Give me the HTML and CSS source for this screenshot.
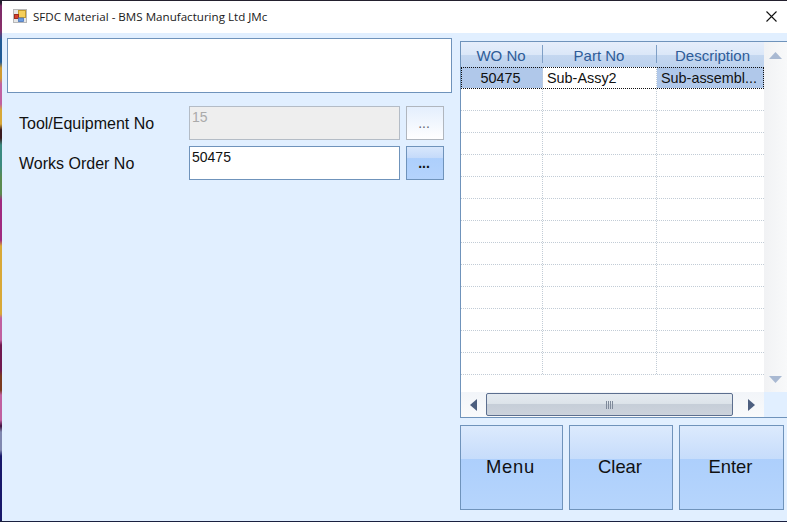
FILE: index.html
```html
<!DOCTYPE html>
<html lang="en">
<head>
<meta charset="utf-8">
<title>SFDC Material</title>
<link rel="stylesheet" href="styles.css">
</head>
<body>
<div class="window">
  <header class="titlebar">
    <svg class="app-icon" width="14" height="14" viewBox="0 0 14 14">
      <rect x="0.5" y="0.5" width="13" height="13" fill="#e6e6e6" stroke="#b8b8b8"/>
      <rect x="5.5" y="1.5" width="7" height="7" fill="#f6cf5a" stroke="#c49a2c"/>
      <rect x="1.5" y="5.5" width="4" height="4" fill="#d8402c" stroke="#9c2f20"/>
      <rect x="5.5" y="9" width="5" height="3.5" fill="#6a9be0" stroke="#4a76b8" stroke-width="0.8"/>
    </svg>
    <span class="title">SFDC Material - BMS Manufacturing Ltd JMc</span>
    <svg class="close" width="11" height="11" viewBox="0 0 11 11">
      <path d="M0.5 0.5 10.5 10.5M10.5 0.5 0.5 10.5" stroke="#111" stroke-width="1.1" fill="none"/>
    </svg>
  </header>
  <main class="client">
    <section class="left">
      <div class="message"></div>
      <div class="form">
        <div class="field">
          <label class="label">Tool/Equipment No</label>
          <div class="input disabled">15</div>
          <button class="dots">...</button>
        </div>
        <div class="field">
          <label class="label">Works Order No</label>
          <div class="input">50475</div>
          <button class="dots active">...</button>
        </div>
      </div>
    </section>
    <section class="right">
      <div class="grid">
        <div class="grid-top">
          <div class="table">
            <div class="row head">
              <div class="c1">WO No</div><div class="c2">Part No</div><div class="c3">Description</div>
            </div>
            <div class="row selected">
              <div class="c1 sel wo">50475</div><div class="c2 left-text">Sub-Assy2</div><div class="c3 sel left-text">Sub-assembl...</div>
            </div>
            <div class="row"><div class="c1"></div><div class="c2"></div><div class="c3"></div></div>
            <div class="row"><div class="c1"></div><div class="c2"></div><div class="c3"></div></div>
            <div class="row"><div class="c1"></div><div class="c2"></div><div class="c3"></div></div>
            <div class="row"><div class="c1"></div><div class="c2"></div><div class="c3"></div></div>
            <div class="row"><div class="c1"></div><div class="c2"></div><div class="c3"></div></div>
            <div class="row"><div class="c1"></div><div class="c2"></div><div class="c3"></div></div>
            <div class="row"><div class="c1"></div><div class="c2"></div><div class="c3"></div></div>
            <div class="row"><div class="c1"></div><div class="c2"></div><div class="c3"></div></div>
            <div class="row"><div class="c1"></div><div class="c2"></div><div class="c3"></div></div>
            <div class="row"><div class="c1"></div><div class="c2"></div><div class="c3"></div></div>
            <div class="row"><div class="c1"></div><div class="c2"></div><div class="c3"></div></div>
            <div class="row"><div class="c1"></div><div class="c2"></div><div class="c3"></div></div>
            <div class="row"><div class="c1"></div><div class="c2"></div><div class="c3"></div></div>
          </div>
          <div class="vscroll">
            <svg width="13" height="8" viewBox="0 0 13 8"><path d="M6.5 0 13 7H0Z" fill="#a9b9d2"/></svg>
            <svg width="13" height="8" viewBox="0 0 13 8"><path d="M0 0H13L6.5 7Z" fill="#a9b9d2"/></svg>
          </div>
        </div>
        <div class="hscroll">
          <svg width="7" height="12" viewBox="0 0 7 12"><path d="M7 0V12L0 6Z" fill="#4d5f7f"/></svg>
          <div class="thumb"><span class="grip"></span></div>
          <svg class="arrow-right" width="7" height="12" viewBox="0 0 7 12"><path d="M0 0V12L7 6Z" fill="#4d5f7f"/></svg>
        </div>
      </div>
      <div class="actions">
        <button class="action menu">Menu</button>
        <button class="action clear">Clear</button>
        <button class="action enter">Enter</button>
      </div>
    </section>
  </main>
</div>
</body>
</html>
```
FILE: styles.css
```css
* { box-sizing: border-box; }
html, body { margin: 0; height: 100%; }
body {
  width: 787px;
  height: 522px;
  overflow: hidden;
  padding: 1px 0 1px 2px;
  background: linear-gradient(180deg,
    #23202e 0, #23202e 3px, #7a2a68 6px, #8a2f6a 30px,
    #1f5a96 40px, #1f5a96 62px, #d09a30 68px, #d09a30 78px,
    #c060a0 84px, #c060a0 104px, #d8a838 110px, #d8a838 124px,
    #3a1a20 130px, #3a1a20 138px, #3b8a80 145px, #3b8a80 165px,
    #5a8a50 178px, #5a8a50 194px, #a02a80 200px, #a02a80 240px,
    #d8a838 246px, #d8a838 314px, #c060a0 318px, #c060a0 340px,
    #701850 345px, #701850 370px, #7a3a20 376px, #7a3a20 390px,
    #c060a0 395px, #c060a0 420px, #401040 426px, #8088b0 432px,
    #8088b0 450px, #17176a 456px, #17176a 520px, #1a2040 521px);
  font-family: "Liberation Sans", Arial, sans-serif;
}
.window { width: 785px; height: 520px; display: flex; flex-direction: column; }
.titlebar {
  height: 32px;
  flex: none;
  background: #fff;
  display: flex;
  align-items: center;
  padding: 0 10px 0 11px;
}
.app-icon { flex: none; margin: 0 6px 2px 0; }
.title { font: 11.6px "Open Sans", "Noto Sans", sans-serif; color: #1a1a1a; flex: 1; white-space: nowrap; margin-bottom: 1px; }
.close { flex: none; margin-bottom: 2px; }
.client {
  flex: 1;
  background: #e1efff;
  display: flex;
  padding: 5px 0 0 5px;
}
.left { width: 445px; flex: none; }
.message { height: 55px; background: #fff; border: 1px solid #6f93bb; }
.form { padding: 13px 8px 0 12px; display: flex; flex-direction: column; gap: 6px; }
.field { display: flex; align-items: center; height: 34px; }
.label { width: 170px; flex: none; font-size: 16px; color: #111; padding-top: 2px; }
.input {
  width: 211px;
  height: 34px;
  background: #fff;
  border: 1px solid #6f93bb;
  font-size: 14px;
  line-height: 16px;
  padding: 2px;
  color: #111;
}
.input.disabled { background: #eeeeee; border-color: #b4bcc6; color: #aaa; }
.dots {
  width: 38px;
  height: 34px;
  margin-left: 6px;
  border: 1px solid #b0b6be;
  background: linear-gradient(180deg, #e4effd 0%, #fff 100%);
  font: 14px "Liberation Sans", sans-serif;
  color: #667;
  padding: 0 2px 0 0;
}
.dots.active {
  border-color: #6f93bb;
  background: linear-gradient(180deg, #d8e7fc 0%, #c4dafa 35%, #adcffc 36%, #b4d3fc 100%);
  color: #111;
  font-weight: bold;
}
.right { margin-left: 8px; width: 327px; flex: none; padding-top: 3px; }
.grid { height: 377px; border: 1px solid #6f93bb; border-right: 0; display: flex; flex-direction: column; }
.grid-top { display: flex; height: 350px; overflow: hidden; }
.table { width: 303px; flex: none; background: #fff; }
.row { display: flex; height: 22px; border-bottom: 1px dotted #c2ccd6; }
.row > div { border-right: 1px dotted #c2ccd6; font-size: 14.4px; line-height: 23px; text-align: center; color: #111; overflow: hidden; white-space: nowrap; }
.c1 { width: 82px; flex: none; }
.c2 { width: 114px; flex: none; }
.c3 { width: 107px; flex: none; border-right: 0 !important; }
.wo { padding-right: 2px; }
.row.head {
  height: 25px;
  border-bottom: 0;
  background: linear-gradient(180deg, #e6eefb 0%, #dbe7f8 50%, #c4d7f0 52%, #bdd2ee 100%);
}
.row.head > div {
  color: #2e5c98;
  font-size: 15px;
  line-height: 27px;
  border-right: 0;
  background: linear-gradient(#7f9fc6, #7f9fc6) right 3px / 1px 18px no-repeat;
}
.row.head > .c1 { padding-right: 2px; }
.row.head > .c2 { padding-right: 2px; }
.row.head > .c3 { background: none; padding-left: 4px; }
.row.selected { height: 22px; outline: 1px dotted #111; outline-offset: -1px; }
.sel { background: #b0c8ea; }
.left-text { text-align: left !important; padding-left: 4px; }
.vscroll {
  flex: 1;
  background: linear-gradient(90deg, #f1f2f4, #f8f9fa);
  display: flex;
  flex-direction: column;
  justify-content: space-between;
  align-items: center;
  padding: 10px 0 8px;
}
.hscroll {
  flex: 1;
  width: 303px;
  background: linear-gradient(180deg, #f2f5f9, #f9fafb);
  display: flex;
  align-items: center;
  padding: 0 0 0 9px;
}
.thumb {
  width: 247px;
  height: 23px;
  margin-left: 9px;
  border: 1px solid #5c6f8f;
  border-radius: 2px;
  background: linear-gradient(180deg, #e4eaf0 0%, #dde4ea 45%, #c6ced8 50%, #ccd3dc 100%);
  display: flex;
  align-items: center;
  justify-content: center;
}
.arrow-right { margin-left: 15px; }
.grip { width: 8px; height: 8px; background: repeating-linear-gradient(90deg, #7f8a9a 0 1px, transparent 1px 2px); }
.actions { display: flex; gap: 6px; margin-top: 7px; }
.action {
  height: 85px;
  border: 1px solid #6f93bb;
  background: linear-gradient(180deg, #dceafd 0%, #c6dcfb 40%, #adcffc 40%, #b6d5fc 100%);
  font: 18.4px "Liberation Sans", sans-serif;
  color: #111;
  padding: 0 2px 2px 0;
}
.menu { width: 103px; letter-spacing: 0.7px; }
.clear { width: 104px; }
.enter { width: 105px; }
```
